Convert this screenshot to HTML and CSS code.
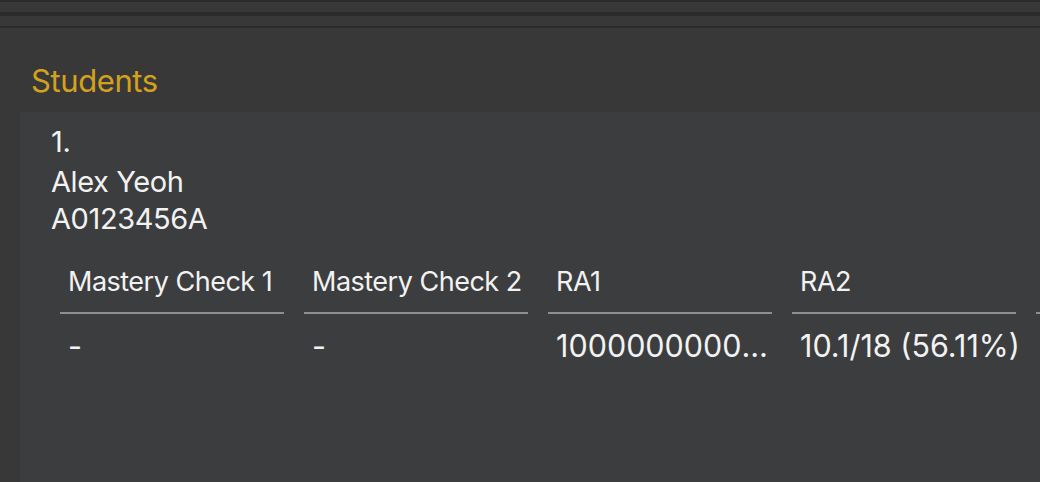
FILE: index.html
```html
<!DOCTYPE html>
<html>
<head>
<meta charset="utf-8">
<link rel="stylesheet" href="styles.css">
</head>
<body>
<div class="bars">
  <div class="bar"></div>
  <div class="bar"></div>
</div>
<div class="panel">
  <div class="title">Students</div>
  <div class="card">
    <div class="index">1.</div>
    <div class="name">Alex Yeoh</div>
    <div class="matric">A0123456A</div>
    <div class="grades">
      <div class="col">
        <div class="head">Mastery Check 1</div>
        <div class="val">-</div>
      </div>
      <div class="col">
        <div class="head">Mastery Check 2</div>
        <div class="val">-</div>
      </div>
      <div class="col">
        <div class="head">RA1</div>
        <div class="val">1000000000/1000000000 (100.00%)</div>
      </div>
      <div class="col">
        <div class="head">RA2</div>
        <div class="val">10.1/18 (56.11%)</div>
      </div>
      <div class="col">
        <div class="head">RA3</div>
        <div class="val">-</div>
      </div>
    </div>
  </div>
</div>
</body>
</html>
```
FILE: styles.css
```css
html, body {
  margin: 0;
  padding: 0;
  width: 1040px;
  height: 482px;
  overflow: hidden;
  background: #383838;
  font-family: Inter, Roboto, "Liberation Sans", sans-serif;
  color: #f2f2f2;
}
.bars {
  border-top: 2px solid #2b2b2b;
  border-bottom: 2px solid #2b2b2b;
}
.bar {
  height: 10px;
  background: #383838;
}
.bar + .bar {
  border-top: 4px solid #2b2b2b;
}
.panel {
  display: flex;
  flex-direction: column;
  height: 454px;
}
.title {
  font-size: 31px;
  line-height: 38px;
  letter-spacing: -0.4px;
  color: #d4a11d;
  padding: 34px 0 0 31px;
  height: 50px;
}
.card {
  flex: 1;
  margin-left: 20px;
  background: #3c3d3f;
  padding: 12px 0 0 31px;
  overflow: hidden;
}
.index, .name, .matric {
  font-size: 29px;
  line-height: 36px;
  letter-spacing: -0.4px;
  white-space: nowrap;
}
.name {
  margin-top: 4px;
}
.matric {
  margin-top: 1px;
}
.grades {
  display: flex;
  gap: 20px;
  margin: 28px 0 0 9px;
}
.col {
  flex: 0 0 224px;
  width: 224px;
}
.head, .val {
  white-space: nowrap;
  overflow: hidden;
  text-overflow: ellipsis;
  padding-left: 8px;
}
.head {
  font-size: 27px;
  line-height: 34px;
  letter-spacing: -0.5px;
  padding-right: 4px;
  padding-bottom: 13px;
  border-bottom: 2px solid #8e8e8e;
}
.val {
  font-size: 30.5px;
  line-height: 36px;
  padding-top: 14px;
  margin-right: -6px;
}
```
